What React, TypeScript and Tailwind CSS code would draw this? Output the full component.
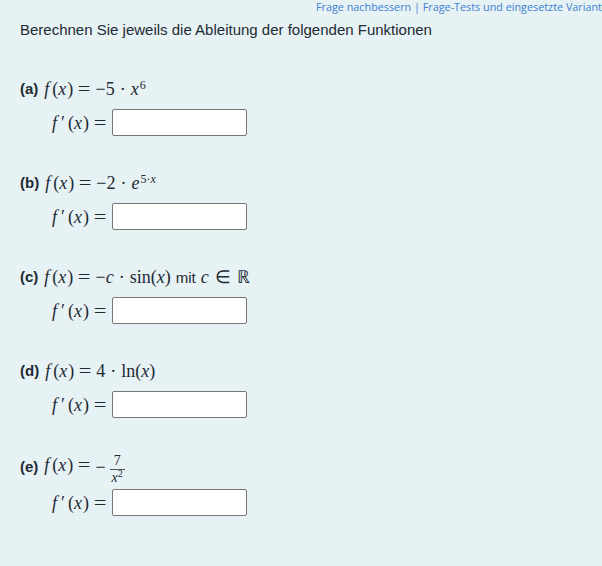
import React from "react";

const serif = "font-['Liberation_Serif',serif]";

const V = ({ children }: { children: React.ReactNode }) => <i>{children}</i>;

const Fx = () => (
    <>
        <V>f</V>
        <span className="ml-[3px]">(</span>
        <V>x</V>
        <span className="ml-[1px]">)</span>
    </>
);

const Eq = () => <span className="mx-[6px] inline-block scale-x-125">=</span>;
const Dot = () => <span className="mx-[5px]">·</span>;

type Task = { label: string; rhs: React.ReactNode; tall?: boolean };

const tasks: Task[] = [
    {
        label: "(a)",
        rhs: (
            <>
                −5<Dot />
                <V>x</V>
                <sup className="text-[12px] ml-[1px]">6</sup>
            </>
        ),
    },
    {
        label: "(b)",
        rhs: (
            <>
                −2<Dot />
                <V>e</V>
                <sup className="text-[12px] ml-[1px]">
                    5·<V>x</V>
                </sup>
            </>
        ),
    },
    {
        label: "(c)",
        rhs: (
            <>
                −<V>c</V>
                <Dot />
                sin(<V>x</V>)
                <span className="font-['Liberation_Sans',sans-serif] text-[15px] mx-[5px]">mit</span>
                <V>c</V>
                <span className="mx-[6px]">∈</span>ℝ
            </>
        ),
    },
    {
        label: "(d)",
        rhs: (
            <>
                4<Dot />
                ln(<V>x</V>)
            </>
        ),
    },
    {
        label: "(e)",
        tall: true,
        rhs: (
            <span className="inline-flex items-center align-middle">
                <span className="mr-[4px]">−</span>
                <span className="inline-flex flex-col items-center leading-none text-[14px] mt-[5px]">
                    <span className="px-[4px] pb-[1px] border-b border-[#555]">7</span>
                    <span className="pt-[1px]">
                        <V>x</V>
                        <sup className="text-[10px]">2</sup>
                    </span>
                </span>
            </span>
        ),
    },
];

const TaskBlock = ({ task }: { task: Task }) => (
    <div className="flex flex-col gap-[8px]">
        <div className={`flex items-center text-[#1d2a33] ${task.tall ? "h-[28px]" : "h-[24px]"}`}>
            <span className="font-['Liberation_Sans',sans-serif] font-bold text-[15px] leading-[24px] mr-[6px]">
                {task.label}
            </span>
            <span className={`${serif} text-[18px] leading-[24px] whitespace-nowrap`}>
                <Fx />
                <Eq />
                {task.rhs}
            </span>
        </div>
        <div className="flex items-center h-[27px] pl-[32px]">
            <span className={`${serif} text-[18px] leading-[24px] text-[#1d2a33] whitespace-nowrap`}>
                <V>f</V>
                <span className="ml-[4px]">′</span>
                <span className="ml-[3px]">(</span>
                <V>x</V>
                <span className="ml-[1px]">)</span>
                <Eq />
            </span>
            <input
                type="text"
                className="ml-[1px] w-[135px] h-[27px] bg-white border border-[#777] rounded-[2px] outline-none"
            />
        </div>
    </div>
);

export default function App() {
    return (
        <div className="min-h-[566px] w-[602px] overflow-hidden bg-[#e7f2f5] font-['Liberation_Sans',sans-serif]">
            <div className="pl-[316px] pt-[1px] h-[14px] whitespace-nowrap font-['Open_Sans',sans-serif] text-[10.8px] text-[#3a7fd0] leading-[12px]">
                Frage nachbessern | Frage-Tests und eingesetzte Variante
            </div>
            <h1 className="px-5 pt-[6px] text-[15px] leading-[20px] text-[#1d2a33]">
                Berechnen Sie jeweils die Ableitung der folgenden Funktionen
            </h1>
            <div className="px-5 pt-[37px] flex flex-col gap-[35px]">
                {tasks.map((t) => (
                    <TaskBlock key={t.label} task={t} />
                ))}
            </div>
        </div>
    );
}
